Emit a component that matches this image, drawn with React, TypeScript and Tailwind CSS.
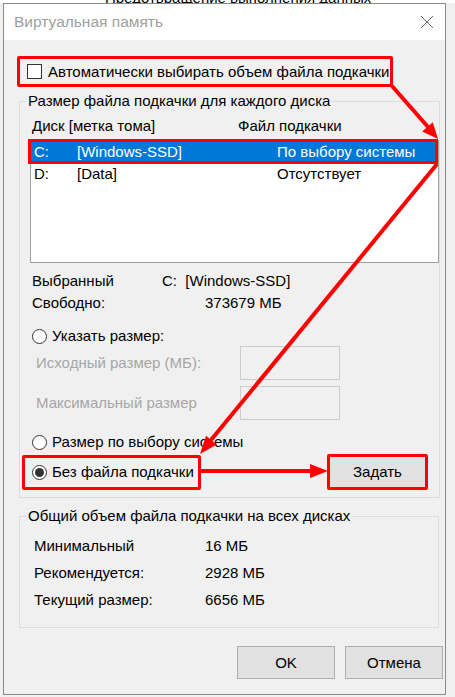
import React from "react";

const Radio = ({ checked }: { checked?: boolean }) => (
  <span className="flex h-[15px] w-[15px] shrink-0 items-center justify-center rounded-full border border-[#333] bg-white">
    {checked && <span className="h-[9px] w-[9px] rounded-full bg-[#333]" />}
  </span>
);

export default function App() {
  return (
    <div className="relative h-[697px] w-[455px] overflow-hidden whitespace-nowrap bg-[#f0f0f0] font-['Liberation_Sans',sans-serif] text-[15px] leading-[20px] text-black">
      <div className="h-[3px] overflow-hidden bg-white">
        <div className="mt-[-12px] pl-[105px] text-[15px] leading-[20px] text-black">Предотвращение выполнения данных</div>
      </div>
      <div className="pl-[3px]">
        <div className="flex h-[692px] w-[443px] flex-col border border-[#8a8a8a] bg-[#f0f0f0]">
          {/* title bar */}
          <div className="flex h-[36px] items-center justify-between bg-white pl-[10px] pr-[6px]">
            <span className="text-[15.5px] text-[#a0a0a0]">Виртуальная память</span>
            <svg width="14" height="14" viewBox="0 0 14 14" className="mr-[5px]">
              <path d="M1 1 L13 13 M13 1 L1 13" stroke="#6e6e6e" strokeWidth="1" />
            </svg>
          </div>
          {/* body */}
          <div className="flex flex-col">
            <div className="ml-[13px] mt-[16px] flex h-[31px] w-[376px] items-center gap-[6px] rounded-[2px] border-[3px] border-[#ff0000] pl-[7px]">
              <span className="h-[15px] w-[15px] shrink-0 border border-[#333] bg-white" />
              <span>Автоматически выбирать объем файла подкачки</span>
            </div>

            <fieldset className="ml-[15px] mt-[4px] w-[420px] border border-[#dcdcdc] px-0 pb-[7px]">
              <legend className="ml-[7px] px-[1px]">Размер файла подкачки для каждого диска</legend>
              <div className="mt-[5px] flex h-[20px] pl-[12px]">
                <span className="w-[206px]">Диск [метка тома]</span>
                <span>Файл подкачки</span>
              </div>
              <div className="ml-[10px] mt-[4px] h-[123px] w-[409px] border border-[#a0a0a0] bg-white">
                <div className="ml-[-3px] mt-[-2px] flex h-[25px] w-[410px] items-center border-[3px] border-[#ff0000] bg-[#0078d7] pl-[3px] text-white">
                  <span className="w-[43px]">C:</span>
                  <span className="w-[200px]">[Windows-SSD]</span>
                  <span>По выбору системы</span>
                </div>
                <div className="flex h-[20px] items-center pl-[3px]">
                  <span className="w-[43px]">D:</span>
                  <span className="w-[200px]">[Data]</span>
                  <span>Отсутствует</span>
                </div>
              </div>
              <div className="mt-[8px] flex h-[20px] pl-[12px]">
                <span className="w-[130px]">Выбранный</span>
                <span>C:&nbsp;&nbsp;[Windows-SSD]</span>
              </div>
              <div className="mt-[2px] flex h-[20px] pl-[12px]">
                <span className="w-[173px]">Свободно:</span>
                <span>373679 МБ</span>
              </div>
              <div className="mt-[13px] flex h-[20px] items-center gap-[5px] pl-[12px]">
                <Radio />
                <span>Указать размер:</span>
              </div>
              <div className="flex h-[34px] items-center pl-[16px] text-[#a6a6a6]">
                <span className="w-[204px]">Исходный размер (МБ):</span>
                <span className="h-[34px] w-[100px] border border-[#cccccc]" />
              </div>
              <div className="mt-[6px] flex h-[34px] items-center pl-[16px] text-[#a6a6a6]">
                <span className="w-[204px]">Максимальный размер</span>
                <span className="h-[34px] w-[100px] border border-[#cccccc]" />
              </div>
              <div className="mt-[12px] flex h-[20px] items-center gap-[5px] pl-[12px]">
                <Radio />
                <span>Размер по выбору системы</span>
              </div>
              <div className="mt-[2px] flex h-[36px] items-center">
                <div className="ml-[2px] flex h-[35px] w-[179px] items-center gap-[5px] rounded-[2px] border-[3px] border-[#ff0000] pl-[7px]">
                  <Radio checked />
                  <span>Без файла подкачки</span>
                </div>
                <div className="ml-[126px] flex h-[36px] w-[101px] items-center justify-center rounded-[2px] border-[3px] border-[#ff0000] bg-[#e1e1e1]">
                  Задать
                </div>
              </div>
            </fieldset>

            <fieldset className="ml-[15px] mt-[8px] w-[420px] border border-[#dcdcdc] px-0 pb-[17px]">
              <legend className="ml-[7px] px-[1px]">Общий объем файла подкачки на всех дисках</legend>
              <div className="mt-[10px] flex flex-col gap-[7px] pl-[14px]">
                <div className="flex h-[20px]">
                  <span className="w-[171px]">Минимальный</span>
                  <span>16 МБ</span>
                </div>
                <div className="flex h-[20px]">
                  <span className="w-[171px]">Рекомендуется:</span>
                  <span>2928 МБ</span>
                </div>
                <div className="flex h-[20px]">
                  <span className="w-[171px]">Текущий размер:</span>
                  <span>6656 МБ</span>
                </div>
              </div>
            </fieldset>

            <div className="mt-[18px] flex justify-end gap-[10px] pr-[2px]">
              <button className="h-[33px] w-[98px] border border-[#adadad] bg-[#e1e1e1]">OK</button>
              <button className="h-[33px] w-[98px] border border-[#adadad] bg-[#e1e1e1]">Отмена</button>
            </div>
          </div>
        </div>
      </div>

      <svg className="pointer-events-none absolute left-0 top-0" width="455" height="697" viewBox="0 0 455 697">
        <line x1="392" y1="86" x2="428" y2="127" stroke="#ff0000" strokeWidth="4" />
        <polygon points="438,139 422.2,131.5 432.8,122.3" fill="#ff0000" />
        <line x1="437" y1="164" x2="211" y2="440" stroke="#ff0000" strokeWidth="4" />
        <polygon points="200,454 216.8,444.5 206,435.7" fill="#ff0000" />
        <line x1="200" y1="471" x2="311" y2="471" stroke="#ff0000" strokeWidth="4" />
        <polygon points="310,464 328,471 310,478" fill="#ff0000" />
      </svg>
    </div>
  );
}
